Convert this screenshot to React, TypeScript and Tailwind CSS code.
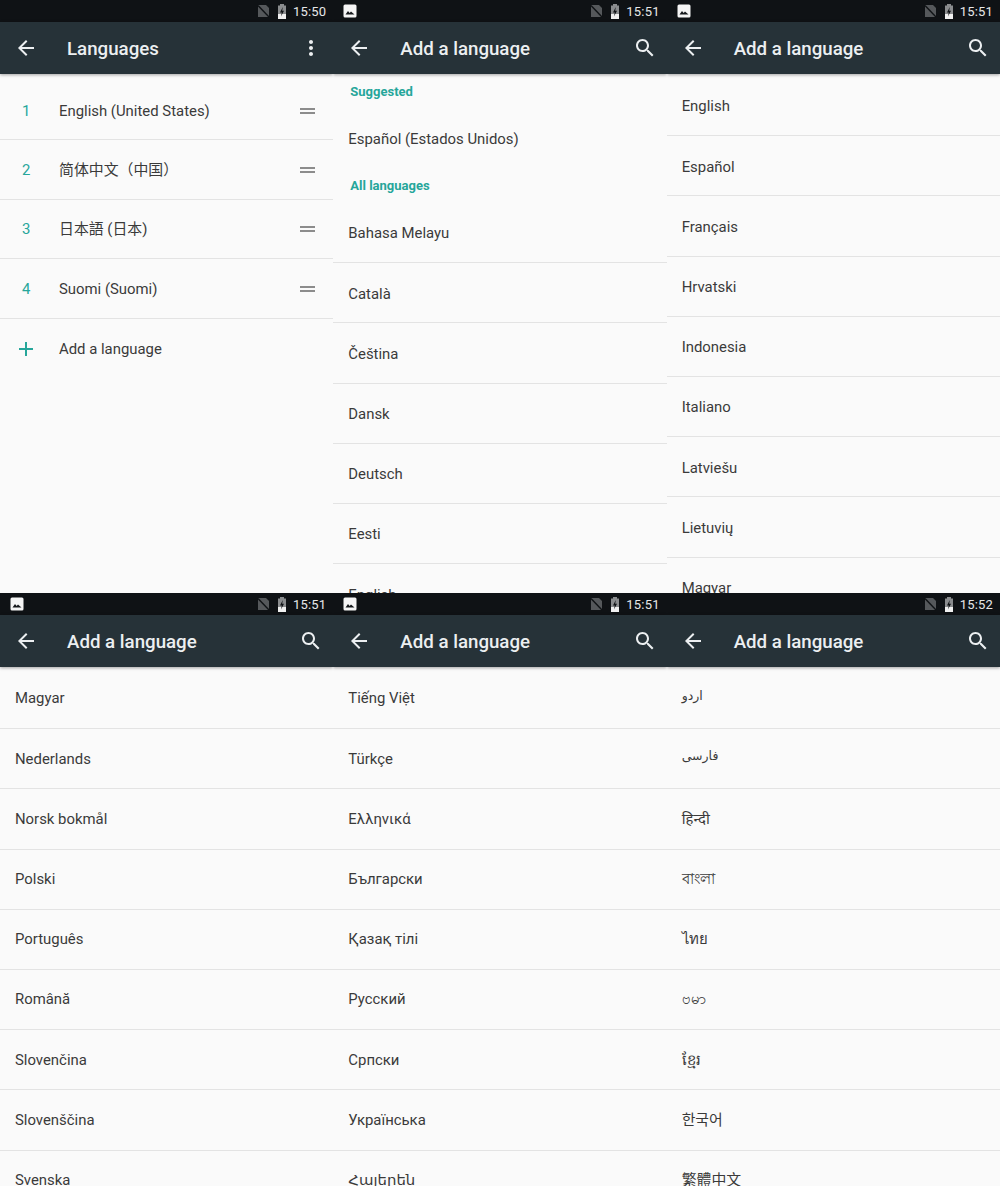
const FONT = "font-['Roboto','Noto_Sans','Noto_Sans_CJK_SC','DejaVu_Sans',sans-serif]";

function PictureIcon() {
  return (
    <svg width="14" height="14" viewBox="0 0 14 14" className="shrink-0">
      <rect x="0.5" y="0.5" width="13" height="13" rx="1.5" fill="#f5f5f5" />
      <path d="M2.5 10.5 5 7l1.6 2 1.4-1.6 3.5 3.1z" fill="#15181b" />
    </svg>
  );
}

function StatusBar({ time, picture }: { time: string; picture?: boolean }) {
  return (
    <div className="h-[22px] shrink-0 bg-[#0f1215] flex items-center pl-[10px] pr-[7px]">
      {picture && <PictureIcon />}
      <div className="ml-auto flex items-center">
        <svg width="13" height="14" viewBox="0 0 13 14">
          <path d="M1 1h8l3 3v9H1z" fill="#55585b" />
          <path d="M1 1.5 12 13" stroke="#0f1215" strokeWidth="1.4" />
        </svg>
        <svg width="10" height="15" viewBox="0 0 10 15" className="ml-[7px]">
          <path d="M3 0h4v1.5h2V15H1V1.5h2z" fill="#8a8c8e" />
          <path d="M1 10h8v5H1z" fill="#f0f0f0" />
          <path d="M5.8 3 3 8.6h1.8L4 12.4 7 6.8H5.2z" fill="#101316" />
        </svg>
        <span className="ml-[6px] text-[13px] leading-none text-[#e6e7e8] tracking-[0.2px]">{time}</span>
      </div>
    </div>
  );
}

function Toolbar({ title, action }: { title: string; action: "search" | "more" }) {
  return (
    <div className="h-[52px] shrink-0 bg-[#263238] flex items-center pl-[14px] pr-[10px] shadow-[0_1px_3px_rgba(0,0,0,0.35)] relative">
      <svg width="24" height="24" viewBox="0 0 24 24" fill="#eceff1" className="shrink-0">
        <path d="M20 11H7.83l5.59-5.59L12 4l-8 8 8 8 1.41-1.41L7.83 13H20v-2z" />
      </svg>
      <span className="ml-[29px] pt-[3px] text-[18.7px] font-medium leading-none text-[#eceff1]">{title}</span>
      <svg width="24" height="24" viewBox="0 0 24 24" fill="#eceff1" className="ml-auto shrink-0">
        {action === "search" ? (
          <path d="M15.5 14h-.79l-.28-.27C15.41 12.59 16 11.11 16 9.5 16 5.91 13.09 3 9.5 3S3 5.91 3 9.5 5.91 16 9.5 16c1.61 0 3.09-.59 4.23-1.57l.27.28v.79l5 4.99L20.49 19l-4.99-5zm-6 0C7.01 14 5 11.99 5 9.5S7.01 5 9.5 5 14 7.01 14 9.5 11.99 14 9.5 14z" />
        ) : (
          <path d="M12 8c1.1 0 2-.9 2-2s-.9-2-2-2-2 .9-2 2 .9 2 2 2zm0 2c-1.1 0-2 .9-2 2s.9 2 2 2 2-.9 2-2-.9-2-2-2zm0 6c-1.1 0-2 .9-2 2s.9 2 2 2 2-.9 2-2-.9-2-2-2z" />
        )}
      </svg>
    </div>
  );
}

function Screen({
  time,
  picture,
  title,
  action = "search",
  children,
}: {
  time: string;
  picture?: boolean;
  title: string;
  action?: "search" | "more";
  children: React.ReactNode;
}) {
  return (
    <div className="h-[593px] overflow-hidden bg-[#fafafa] flex flex-col">
      <StatusBar time={time} picture={picture} />
      <Toolbar title={title} action={action} />
      {children}
    </div>
  );
}

function LangRow({ label, low, small }: { label: string; low?: boolean; small?: boolean }) {
  return (
    <div
      className={`h-[60.2px] shrink-0 flex items-center px-[15px] border-b border-[#e3e3e3] text-[#3a3a3a] ${low ? "pt-[2px]" : ""} ${small ? "text-[12.5px] pb-[4px]" : "text-[14.9px]"}`}
    >
      {label}
    </div>
  );
}

const rtl = ["اردو", "فارسی"];

function LangList({ items, low }: { items: string[]; low?: boolean }) {
  return (
    <div className="pt-[2px]">
      {items.map((item) => (
        <LangRow key={item} label={item} low={low} small={rtl.includes(item)} />
      ))}
    </div>
  );
}

const current = ["English (United States)", "简体中文（中国）", "日本語 (日本)", "Suomi (Suomi)"];

export default function App() {
  return (
    <div className={`w-[1000px] h-[1186px] overflow-hidden grid grid-cols-3 ${FONT}`}>
      <Screen time="15:50" title="Languages" action="more">
        <div className="pt-[7px]">
          {current.map((label, i) => (
            <div key={label} className="h-[59.4px] pt-[1px] flex items-center border-b border-[#e3e3e3] text-[14.9px] text-[#3a3a3a]">
              <span className="w-[59px] pl-[22px] text-[#26a69a]">{i + 1}</span>
              <span>{label}</span>
              <span className="ml-auto mr-[18px] w-[15px] h-[6px] border-y-2 border-[#8c8c8c]" />
            </div>
          ))}
          <div className="h-[59.4px] pt-[1px] flex items-center text-[14.9px] text-[#3a3a3a]">
            <span className="w-[59px] pl-[14px]">
              <svg width="24" height="24" viewBox="0 0 24 24" fill="#26a69a">
                <path d="M19 13h-6v6h-2v-6H5v-2h6V5h2v6h6v2z" />
              </svg>
            </span>
            <span>Add a language</span>
          </div>
        </div>
      </Screen>

      <Screen time="15:51" picture title="Add a language">
        <div className="h-[35px] shrink-0 flex items-center pl-[17px] text-[13px] font-bold text-[#26a69a]">Suggested</div>
        <div className="h-[60px] shrink-0 flex items-center px-[15px] text-[14.9px] text-[#3a3a3a]">Español (Estados Unidos)</div>
        <div className="h-[34px] shrink-0 flex items-center pl-[17px] text-[13px] font-bold text-[#26a69a]">All languages</div>
        <div>
          {["Bahasa Melayu", "Català", "Čeština", "Dansk", "Deutsch", "Eesti", "English"].map((item) => (
            <LangRow key={item} label={item} low />
          ))}
        </div>
      </Screen>

      <Screen time="15:51" picture title="Add a language">
        <LangList low items={["English", "Español", "Français", "Hrvatski", "Indonesia", "Italiano", "Latviešu", "Lietuvių", "Magyar"]} />
      </Screen>

      <Screen time="15:51" picture title="Add a language">
        <LangList items={["Magyar", "Nederlands", "Norsk bokmål", "Polski", "Português", "Română", "Slovenčina", "Slovenščina", "Svenska"]} />
      </Screen>

      <Screen time="15:51" picture title="Add a language">
        <LangList items={["Tiếng Việt", "Türkçe", "Ελληνικά", "Български", "Қазақ тілі", "Русский", "Српски", "Українська", "Հայերեն"]} />
      </Screen>

      <Screen time="15:52" title="Add a language">
        <LangList items={["اردو", "فارسی", "हिन्दी", "বাংলা", "ไทย", "ဗမာ", "ខ្មែរ", "한국어", "繁體中文"]} />
      </Screen>
    </div>
  );
}
